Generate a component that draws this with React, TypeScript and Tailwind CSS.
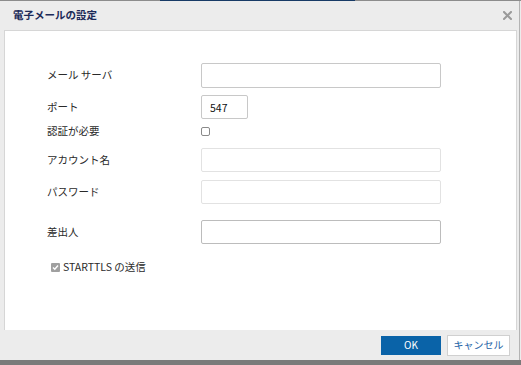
import React from "react";

const font = { fontFamily: '"Noto Sans CJK JP", "Liberation Sans", sans-serif' };

function Row({ label, children, className }: { label: string; children: React.ReactNode; className: string }) {
  return (
    <div className={`flex items-center ${className}`}>
      <div className="w-[154px] text-[10.5px] leading-none text-[#2a2a2a]">{label}</div>
      {children}
    </div>
  );
}

export default function App() {
  return (
    <div className="w-[521px] h-[365px] bg-[#ececec] relative overflow-hidden" style={font}>
      {/* top line */}
      <div className="flex h-px">
        <div className="w-[160px] bg-[#8c8c8c]" />
        <div className="w-[195px] bg-[#173a66]" />
        <div className="flex-1 bg-[#8c8c8c]" />
      </div>
      <div className="flex">
        <div className="flex-1 flex flex-col">
          {/* header */}
          <div className="h-[29px] flex items-center pl-[13px] pr-[6px] relative">
            <div className="text-[10.5px] font-bold text-[#1b2a58] leading-none">電子メールの設定</div>
            <button className="ml-auto w-[12px] h-[12px] flex items-center justify-center">
              <svg width="9" height="9" viewBox="0 0 9 9">
                <path d="M1 1 L8 8 M8 1 L1 8" stroke="#9a9a9a" strokeWidth="2" strokeLinecap="square" />
              </svg>
            </button>
          </div>
          {/* body */}
          <div className="ml-[4px] mr-[2px] h-[300px] bg-white border-l border-t border-r border-[#d6d6d6] pl-[42px] flex flex-col">
            <Row label="メール サーバ" className="mt-[32px] h-[25px]">
              <input className="w-[240px] h-[25px] border border-[#c8c8c8] rounded-[2px] bg-white outline-none" />
            </Row>
            <Row label="ポート" className="mt-[7px] h-[24px]">
              <input
                defaultValue="547"
                className="w-[47px] h-[24px] border border-[#c8c8c8] rounded-[2px] bg-white outline-none px-[8px] text-[10.5px] text-[#111]"
                style={font}
              />
            </Row>
            <Row label="認証が必要" className="mt-[3px] h-[19px]">
              <div className="w-[9px] h-[9px] border border-[#8a8a8a] rounded-[2px] bg-white" />
            </Row>
            <Row label="アカウント名" className="mt-[7px] h-[24px]">
              <div className="w-[240px] h-[24px] border border-[#e2e2e2] rounded-[2px] bg-white" />
            </Row>
            <Row label="パスワード" className="mt-[8px] h-[24px]">
              <div className="w-[240px] h-[24px] border border-[#e2e2e2] rounded-[2px] bg-white" />
            </Row>
            <Row label="差出人" className="mt-[16px] h-[24px]">
              <input className="w-[240px] h-[24px] border border-[#bcbcbc] rounded-[2px] bg-white outline-none" />
            </Row>
            <div className="mt-[14px] h-[19px] flex items-center pl-[4px]">
              <div className="w-[9px] h-[9px] bg-[#a0a0a0] rounded-[1px] flex items-center justify-center">
                <svg width="7" height="7" viewBox="0 0 7 7">
                  <path d="M1 3.5 L2.8 5.3 L6 1.5" stroke="#ffffff" strokeWidth="1.4" fill="none" />
                </svg>
              </div>
              <div className="ml-[3px] text-[10.5px] leading-none text-[#2a2a2a]">STARTTLS の送信</div>
            </div>
          </div>
          {/* footer */}
          <div className="h-[30px] flex items-center justify-end pr-[9px] gap-[6px]">
            <button className="w-[60px] h-[19px] bg-[#0a63a8] text-white text-[10px] leading-none flex items-center justify-center">
              OK
            </button>
            <button className="w-[63px] h-[21px] bg-white border border-[#d0d0d0] text-[#1c5fa6] text-[10px] leading-none flex items-center justify-center">
              キャンセル
            </button>
          </div>
        </div>
        <div className="w-px bg-[#b4b4b4] mr-[1px]" />
      </div>
      {/* bottom strip */}
      <div className="absolute left-0 right-0 bottom-0 h-[5px] bg-[#7a7a7a]" />
    </div>
  );
}
